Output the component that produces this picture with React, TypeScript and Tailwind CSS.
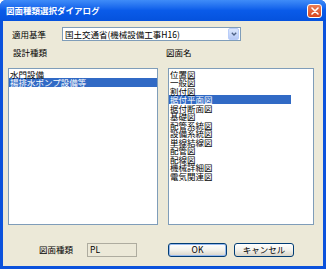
import React from "react";

const designTypes = ["水門設備", "揚排水ポンプ設備等"];
const drawingNames = [
  "位置図",
  "一般図",
  "割付図",
  "据付平面図",
  "据付断面図",
  "基礎図",
  "配管系統図",
  "設備系統図",
  "単線結線図",
  "配管図",
  "配線図",
  "機械詳細図",
  "電気関連図",
];

function ListBox({
  items,
  selected,
  itemWidth,
}: {
  items: string[];
  selected: number;
  itemWidth?: string;
}) {
  return (
    <div className="h-[157px] border border-[#7f9db9] bg-white pt-[1px]">
      {items.map((item, i) => (
        <div
          key={item}
          className={`h-[8.5px] leading-[8.5px] pl-[1px] whitespace-nowrap ${itemWidth ?? ""} ${
            i === selected ? "bg-[#316ac5] text-white" : "text-black"
          }`}
        >
          {item}
        </div>
      ))}
    </div>
  );
}

function XpButton({ label, isDefault }: { label: string; isDefault?: boolean }) {
  return (
    <button
      className={`h-[14px] rounded-[3px] border border-[#003c74] bg-gradient-to-b from-[#ffffff] via-[#f3f2ec] to-[#d8d4c8] flex items-center justify-center leading-none ${
        isDefault ? "shadow-[inset_0_0_0_1px_#97b9ef]" : ""
      }`}
    >
      {label}
    </button>
  );
}

export default function App() {
  return (
    <div className="w-[326px] h-[269px] flex flex-col bg-[#0b52dc] rounded-t-[6px] overflow-hidden font-['Noto_Sans_CJK_JP',sans-serif] text-[8.5px] text-black">
      {/* title bar */}
      <div className="h-[21px] shrink-0 flex items-center pl-[6px] pr-[4px] bg-gradient-to-b from-[#3f8cf8] via-[#0a5be9] to-[#0552dd]">
        <span className="text-white font-bold leading-none">図面種類選択ダイアログ</span>
        <div className="ml-auto w-[15px] h-[14px] rounded-[3px] border border-white bg-gradient-to-b from-[#eb7d55] to-[#d8461c] flex items-center justify-center">
          <svg width="8" height="8" viewBox="0 0 8 8">
            <path d="M1 1 L7 7 M7 1 L1 7" stroke="white" strokeWidth="1.6" strokeLinecap="round" />
          </svg>
        </div>
      </div>

      {/* body */}
      <div className="flex-1 mx-[3px] mb-[3px] bg-[#ece9d8] flex flex-col px-[5px]">
        <div className="mt-[6px] h-[14px] flex items-center">
          <span className="w-[54px] pl-[4px] leading-none">適用基準</span>
          <div className="w-[179px] h-[14px] border border-[#7f9db9] bg-white flex items-center pl-[2px] pr-[1px]">
            <span className="leading-none whitespace-nowrap">国土交通省(機械設備工事H16)</span>
            <div className="ml-auto w-[11px] h-[12px] rounded-[2px] border border-[#b9cdf9] bg-gradient-to-b from-[#dce7fd] to-[#b6c9f6] flex items-center justify-center">
              <svg width="6" height="4" viewBox="0 0 6 4">
                <path d="M0.8 0.8 L3 3 L5.2 0.8" stroke="#4d6185" strokeWidth="1.3" fill="none" />
              </svg>
            </div>
          </div>
        </div>

        <div className="mt-[7px] grid grid-cols-[150px_146px] gap-x-[10px] leading-[8.5px]">
          <span className="pl-[5px]">設計種類</span>
          <span className="-ml-[2px]">図面名</span>
        </div>

        <div className="mt-[11px] grid grid-cols-[150px_146px] gap-x-[10px]">
          <ListBox items={designTypes} selected={1} />
          <ListBox items={drawingNames} selected={3} itemWidth="w-[122px]" />
        </div>

        <div className="mt-[18px] grid grid-cols-[150px_146px] gap-x-[10px]">
          <div className="flex items-center h-[14px]">
            <span className="ml-[31px] w-[48px] leading-none">図面種類</span>
            <div className="w-[50px] h-[14px] border border-[#aeac9f] flex items-center pl-[2px] leading-none">
              PL
            </div>
          </div>
          <div className="flex gap-[7px]">
            <div className="w-[59px]">
              <div className="flex flex-col">
                <XpButton label="OK" isDefault />
              </div>
            </div>
            <div className="w-[60px] flex flex-col">
              <XpButton label="キャンセル" />
            </div>
          </div>
        </div>
      </div>
    </div>
  );
}
